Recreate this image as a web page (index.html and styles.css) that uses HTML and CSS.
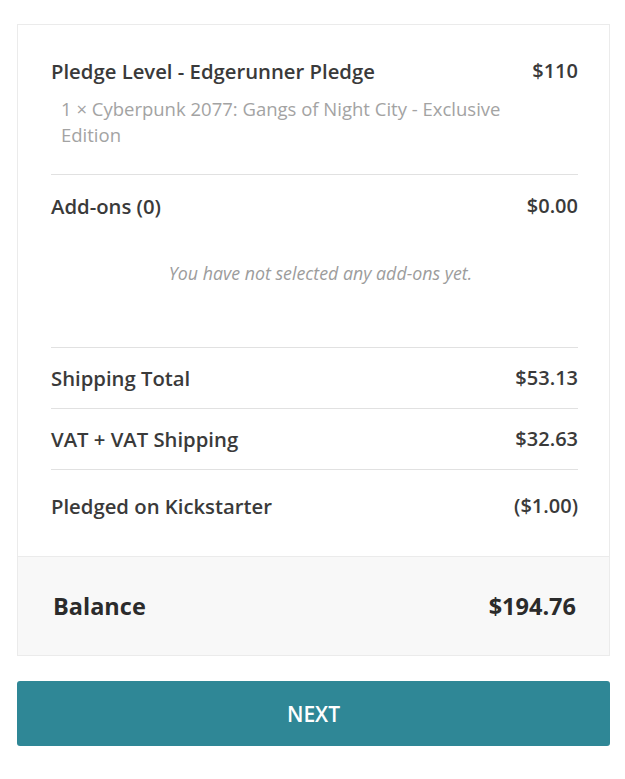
FILE: index.html
```html
<!DOCTYPE html>
<html lang="en">
<head>
<meta charset="utf-8">
<title>Pledge Summary</title>
<link rel="stylesheet" href="styles.css">
</head>
<body>
<main class="page">
  <section class="card">
    <div class="items">
      <div class="group group-pledge">
        <div class="row">
          <span class="label">Pledge Level - Edgerunner Pledge</span>
          <span class="amount">$110</span>
        </div>
        <p class="sub">1 × Cyberpunk 2077: Gangs of Night City - Exclusive Edition</p>
      </div>
      <div class="group group-addons">
        <div class="row">
          <span class="label">Add-ons (0)</span>
          <span class="amount">$0.00</span>
        </div>
        <p class="empty">You have not selected any add-ons yet.</p>
      </div>
      <div class="group group-line">
        <div class="row">
          <span class="label">Shipping Total</span>
          <span class="amount">$53.13</span>
        </div>
      </div>
      <div class="group group-line">
        <div class="row">
          <span class="label">VAT + VAT Shipping</span>
          <span class="amount">$32.63</span>
        </div>
      </div>
      <div class="group group-last">
        <div class="row">
          <span class="label">Pledged on Kickstarter</span>
          <span class="amount">($1.00)</span>
        </div>
      </div>
    </div>
    <div class="balance">
      <span class="balance-label">Balance</span>
      <span class="balance-amount">$194.76</span>
    </div>
  </section>
  <button class="next" type="button">NEXT</button>
</main>
</body>
</html>
```
FILE: styles.css
```css
* { box-sizing: border-box; }

html, body {
  margin: 0;
  padding: 0;
  background: #ffffff;
}

body {
  font-family: "Open Sans", "Noto Sans", sans-serif;
  color: #333333;
}

.page {
  width: 593px;
  margin: 24px 0 0 17px;
}

.card {
  border: 1px solid #ebebeb;
  background: #ffffff;
}

.items {
  padding: 0 31px 0 33px;
}

.group {
  border-bottom: 1px solid #e1e1e1;
}

.group-pledge {
  padding: 32px 0 26px;
}

.group-addons {
  padding: 17px 0 62px;
}

.group-line {
  padding: 16px 0 16px;
}

.group-last {
  border-bottom: none;
  padding: 22px 0 36px;
}

.row {
  display: flex;
  justify-content: space-between;
  align-items: center;
  height: 28px;
  font-weight: 600;
  color: #3a3a3a;
}

.label {
  font-size: 20.3px;
  line-height: 28px;
}

.amount {
  font-size: 20px;
  line-height: 28px;
}

.sub {
  margin: 11px 0 0;
  padding: 0 70px 0 10px;
  font-size: 18.5px;
  line-height: 26px;
  color: #a3a3a3;
}

.empty {
  margin: 41px 0 0;
  padding-left: 12px;
  text-align: center;
  font-size: 17.8px;
  line-height: 24px;
  font-style: italic;
  color: #9c9c9c;
}

.balance {
  display: flex;
  justify-content: space-between;
  align-items: center;
  height: 99px;
  background: #f8f8f8;
  border-top: 1px solid #ebebeb;
  padding: 0 33px 0 35px;
  font-size: 23.5px;
  line-height: 32px;
  font-weight: 700;
  color: #2b2b2b;
}

.next {
  display: block;
  width: 100%;
  height: 65px;
  margin-top: 25px;
  border: none;
  border-radius: 3px;
  background: #2f8796;
  color: #ffffff;
  font-family: "Open Sans", "Noto Sans", sans-serif;
  font-size: 21px;
  font-weight: 600;
  letter-spacing: 0;
  cursor: pointer;
}
```
